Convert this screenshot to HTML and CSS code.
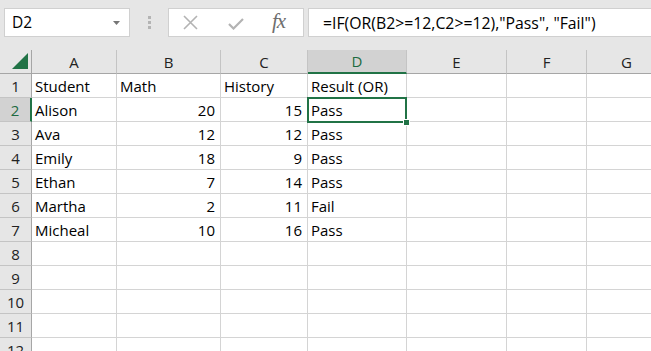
FILE: index.html
```html
<!DOCTYPE html>
<html>
<head>
<meta charset="utf-8">
<link rel="stylesheet" href="styles.css">
</head>
<body>
<div class="app">
  <div class="fbar">
    <div class="namebox">
      <span class="name">D2</span>
      <svg class="caret" width="7" height="4" viewBox="0 0 7 4"><path d="M0 0H7L3.5 4Z" fill="#767676"/></svg>
    </div>
    <div class="grip"><i></i><i></i><i></i></div>
    <div class="fxbtns">
      <svg class="ico-x" width="15" height="15" viewBox="0 0 15 15"><path d="M1 1L14 14M14 1L1 14" stroke="#b3b3b3" stroke-width="1.6" fill="none"/></svg>
      <svg class="ico-ok" width="16" height="12" viewBox="0 0 16 12"><path d="M1 6L5.5 10.5L15 1" stroke="#b3b3b3" stroke-width="2.2" fill="none"/></svg>
      <span class="fx">fx</span>
    </div>
    <div class="finput">=IF(OR(B2&gt;=12,C2&gt;=12),"Pass", "Fail")</div>
  </div>
  <div class="grid">
    <div class="corner"><svg width="17" height="17" viewBox="0 0 17 17"><path d="M16 0V16H0Z" fill="#217346"/></svg></div>
    <div class="ch">A</div><div class="ch">B</div><div class="ch">C</div><div class="ch sel">D</div><div class="ch">E</div><div class="ch">F</div><div class="ch">G</div>

    <div class="rh">1</div><div class="c">Student</div><div class="c">Math</div><div class="c">History</div><div class="c">Result (OR)</div><div class="c"></div><div class="c"></div><div class="c"></div>
    <div class="rh sel">2</div><div class="c">Alison</div><div class="c n">20</div><div class="c n">15</div><div class="c active">Pass<span class="selbox"><span class="handle"></span></span></div><div class="c"></div><div class="c"></div><div class="c"></div>
    <div class="rh">3</div><div class="c">Ava</div><div class="c n">12</div><div class="c n">12</div><div class="c">Pass</div><div class="c"></div><div class="c"></div><div class="c"></div>
    <div class="rh">4</div><div class="c">Emily</div><div class="c n">18</div><div class="c n">9</div><div class="c">Pass</div><div class="c"></div><div class="c"></div><div class="c"></div>
    <div class="rh">5</div><div class="c">Ethan</div><div class="c n">7</div><div class="c n">14</div><div class="c">Pass</div><div class="c"></div><div class="c"></div><div class="c"></div>
    <div class="rh">6</div><div class="c">Martha</div><div class="c n">2</div><div class="c n">11</div><div class="c">Fail</div><div class="c"></div><div class="c"></div><div class="c"></div>
    <div class="rh">7</div><div class="c">Micheal</div><div class="c n">10</div><div class="c n">16</div><div class="c">Pass</div><div class="c"></div><div class="c"></div><div class="c"></div>
    <div class="rh">8</div><div class="c"></div><div class="c"></div><div class="c"></div><div class="c"></div><div class="c"></div><div class="c"></div><div class="c"></div>
    <div class="rh">9</div><div class="c"></div><div class="c"></div><div class="c"></div><div class="c"></div><div class="c"></div><div class="c"></div><div class="c"></div>
    <div class="rh">10</div><div class="c"></div><div class="c"></div><div class="c"></div><div class="c"></div><div class="c"></div><div class="c"></div><div class="c"></div>
    <div class="rh">11</div><div class="c"></div><div class="c"></div><div class="c"></div><div class="c"></div><div class="c"></div><div class="c"></div><div class="c"></div>
    <div class="rh">12</div><div class="c"></div><div class="c"></div><div class="c"></div><div class="c"></div><div class="c"></div><div class="c"></div><div class="c"></div>
  </div>
</div>
</body>
</html>
```

FILE: styles.css
```css
* { box-sizing: border-box; }
html, body { margin: 0; padding: 0; }
body {
  background: #e6e6e6;
  font-family: "Open Sans", "Liberation Sans", sans-serif;
  font-size: 15px;
  color: #000;
  width: 651px;
  height: 351px;
  overflow: hidden;
}
.app { width: 651px; height: 351px; overflow: hidden; }

.fbar {
  height: 50px;
  display: flex;
  align-items: flex-start;
  padding-top: 8px;
  padding-left: 4px;
}
.namebox {
  width: 126px;
  height: 29px;
  background: #fff;
  border: 1px solid #d0d0d0;
  display: flex;
  align-items: center;
  padding: 0 9px 0 7px;
  justify-content: space-between;
}
.name { line-height: 1; font-size: 15.5px; }
.caret { margin-top: 1px; }
.grip {
  width: 38px;
  height: 29px;
  display: flex;
  flex-direction: column;
  align-items: center;
  padding-top: 8px;
  gap: 2px;
}
.grip i { display: block; width: 3px; height: 3px; background: #b4b4b4; }
.fxbtns {
  width: 136px;
  height: 29px;
  background: #fff;
  border: 1px solid #d0d0d0;
  display: flex;
  align-items: center;
  padding-left: 14px;
}
.ico-x { margin-right: 30px; }
.ico-ok { margin-right: 28px; margin-top: 2px; }
.fx {
  font-family: "Liberation Serif", "DejaVu Serif", serif;
  font-style: italic;
  font-size: 21px;
  color: #6e6e6e;
  letter-spacing: -1px;
  margin-top: -2px;
}
.finput {
  flex: 1;
  margin-left: 4px;
  height: 29px;
  background: #fff;
  border: 1px solid #d0d0d0;
  border-right: none;
  padding-left: 14px;
  display: flex;
  align-items: center;
  white-space: nowrap;
  font-size: 15.8px;
}

.grid {
  display: grid;
  grid-template-columns: 32px 85px 104px 87px 99px 100px 80px 80px;
  grid-auto-rows: 24px;
  width: 667px;
  background: #fff;
}
.grid > div {
  border-right: 1px solid #d4d4d4;
  border-bottom: 1px solid #d4d4d4;
  display: flex;
  align-items: center;
  white-space: nowrap;
}
.grid > .corner {
  background: #e6e6e6;
  border-right: 1px solid #a6a6a6;
  border-bottom: 1px solid #a6a6a6;
  align-items: flex-end;
  justify-content: flex-end;
  padding: 0 2px 3px 0;
}
.grid > .ch {
  background: #e6e6e6;
  border-right: 1px solid #c4c4c4;
  border-bottom: 1px solid #a6a6a6;
  justify-content: center;
  color: #222;
}
.grid > .ch.sel {
  background: #d2d2d2;
  border-bottom: 2px solid #217346;
  color: #1d6b41;
}
.grid > .rh {
  background: #e6e6e6;
  border-right: 1px solid #a6a6a6;
  border-bottom: 1px solid #c4c4c4;
  justify-content: center;
  color: #222;
}
.grid > .rh.sel {
  background: #d2d2d2;
  border-right: 2px solid #217346;
  color: #1d6b41;
}
.grid > .c { padding: 0 3px; }
.grid > .c.n { justify-content: flex-end; padding-right: 5px; }
.grid > .c.active { position: relative; }
.selbox {
  position: absolute;
  left: -1px;
  top: -1px;
  width: 100px;
  height: 26px;
  border: 2px solid #217346;
}
.handle {
  position: absolute;
  right: -5px;
  bottom: -5px;
  width: 7px;
  height: 7px;
  background: #217346;
  border: 1px solid #fff;
}
```
